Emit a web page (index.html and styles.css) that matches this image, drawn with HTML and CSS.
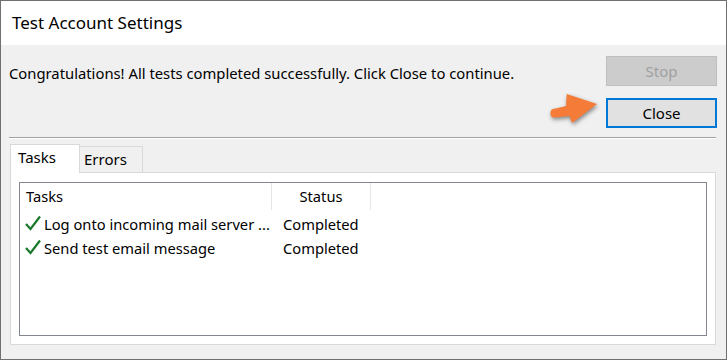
FILE: index.html
```html
<!DOCTYPE html>
<html>
<head>
    <title>Test Account Settings</title>
    <link rel="stylesheet" href="styles.css">
</head>
<body>

<div class="window">
    <div class="titlebar">Test Account Settings</div>
    <div class="content">
        <div class="top-row">
            <div class="message">Congratulations! All tests completed successfully. Click Close to continue.</div>
            <div class="buttons">
                <button class="btn" disabled>Stop</button>
                <div class="close-wrap">
                    <svg class="pointer" width="60" height="40" viewBox="0 0 60 40">
                        <path d="M24.7 6 L55 16 L30 35 L27.5 28 C20 28.5 15 29.5 11.5 29.5 C7.5 29.5 7.5 21.5 11 21 C16 20 20 19 24 18 Z" fill="#f57b39"/>
                    </svg>
                    <button class="btn btn-default">Close</button>
                </div>
            </div>
        </div>
        <div class="separator"></div>

        <div class="tab-strip">
            <div class="tab selected">Tasks</div>
            <div class="tab">Errors</div>
        </div>
        <div class="tab-panel">
            <div class="listview">
                <div class="lv-header">
                    <div class="col-task">Tasks</div>
                    <div class="col-status">Status</div>
                </div>
                <div class="lv-rows">
                    <div class="lv-row">
                        <div class="col-task">
                            <svg class="check" width="16" height="16" viewBox="0 0 16 16"><path d="M1 9 L5.5 14 L15 1.5" fill="none" stroke="#1d7a2c" stroke-width="2.2"/></svg>
                            <span>Log onto incoming mail server ...</span>
                        </div>
                        <div class="col-status">Completed</div>
                    </div>
                    <div class="lv-row">
                        <div class="col-task">
                            <svg class="check" width="16" height="16" viewBox="0 0 16 16"><path d="M1 9 L5.5 14 L15 1.5" fill="none" stroke="#1d7a2c" stroke-width="2.2"/></svg>
                            <span>Send test email message</span>
                        </div>
                        <div class="col-status">Completed</div>
                    </div>
                </div>
            </div>
        </div>
    </div>
</div>

</body>
</html>
```

FILE: styles.css
```css
body {
    margin: 0;
    padding: 0;
    font-family: 'Noto Sans', 'Open Sans', sans-serif;
    font-size: 15px;
    color: #000;
    background-color: #f0f0f0;
}

.window {
    width: 727px;
    height: 360px;
    box-sizing: border-box;
    border: 1px solid #707070;
    background-color: #f0f0f0;
    overflow: hidden;
}

.titlebar {
    height: 44px;
    line-height: 44px;
    padding-left: 11px;
    font-size: 17px;
    background-color: #fff;
}

.content {
    padding: 11px 10px 0 8px;
}

.top-row {
    display: flex;
    justify-content: space-between;
}

.message {
    margin-top: 2px;
    line-height: 30px;
    font-size: 14.8px;
}

.buttons {
    display: flex;
    flex-direction: column;
    gap: 12px;
    margin-right: -1px;
}

.close-wrap {
    position: relative;
}

.pointer {
    position: absolute;
    left: -64px;
    top: -10px;
    filter: drop-shadow(1px 2px 2px rgba(0, 0, 0, 0.45));
}

.btn {
    display: block;
    width: 111px;
    height: 30px;
    box-sizing: border-box;
    border: 1px solid #adadad;
    background-color: #e1e1e1;
    font-family: inherit;
    font-size: 15px;
    color: #000;
    padding: 0;
}

.btn:disabled {
    background-color: #cccccc;
    border-color: #bfbfbf;
    color: #a0a0a0;
}

.btn-default {
    border: 2px solid #0078d7;
}

.separator {
    margin-top: 9px;
    height: 1px;
    background-color: #a0a0a0;
    border-bottom: 1px solid #fff;
}

.tab-strip {
    display: flex;
    align-items: flex-end;
    margin-top: 5px;
    padding-left: 1px;
}

.tab {
    box-sizing: border-box;
    width: 63px;
    height: 26px;
    line-height: 24px;
    padding-left: 4px;
    border: 1px solid #d9d9d9;
    border-left: none;
    border-bottom: none;
    background-color: #f0f0f0;
}

.tab.selected {
    position: relative;
    z-index: 1;
    width: 70px;
    height: 29px;
    margin-bottom: -1px;
    padding-left: 7px;
    border-left: 1px solid #d9d9d9;
    background-color: #fff;
}

.tab-panel {
    box-sizing: border-box;
    height: 173px;
    margin-left: 1px;
    padding: 9px 8px 8px 8px;
    border: 1px solid #d9d9d9;
    background-color: #fff;
}

.listview {
    box-sizing: border-box;
    height: 100%;
    border: 1px solid #828790;
    background-color: #fff;
    font-size: 14.7px;
}

.lv-header,
.lv-row {
    display: flex;
}

.lv-header {
    height: 27px;
    line-height: 27px;
}

.lv-header .col-task {
    padding-left: 6px;
}

.lv-header .col-status {
    text-align: center;
}

.col-task {
    box-sizing: border-box;
    width: 252px;
    border-right: 1px solid #e5e5e5;
    white-space: nowrap;
    overflow: hidden;
}

.col-status {
    box-sizing: border-box;
    width: 99px;
    border-right: 1px solid #e5e5e5;
    white-space: nowrap;
}

.lv-rows {
    padding-top: 2px;
}

.lv-row {
    height: 24px;
    line-height: 24px;
}

.lv-row .col-task,
.lv-row .col-status {
    border-right-color: transparent;
}

.lv-row .col-task {
    display: flex;
    align-items: center;
    gap: 3px;
    padding-left: 5px;
}

.lv-row .col-status {
    padding-left: 11px;
}

.check {
    flex: none;
    margin-top: -2px;
}
```
